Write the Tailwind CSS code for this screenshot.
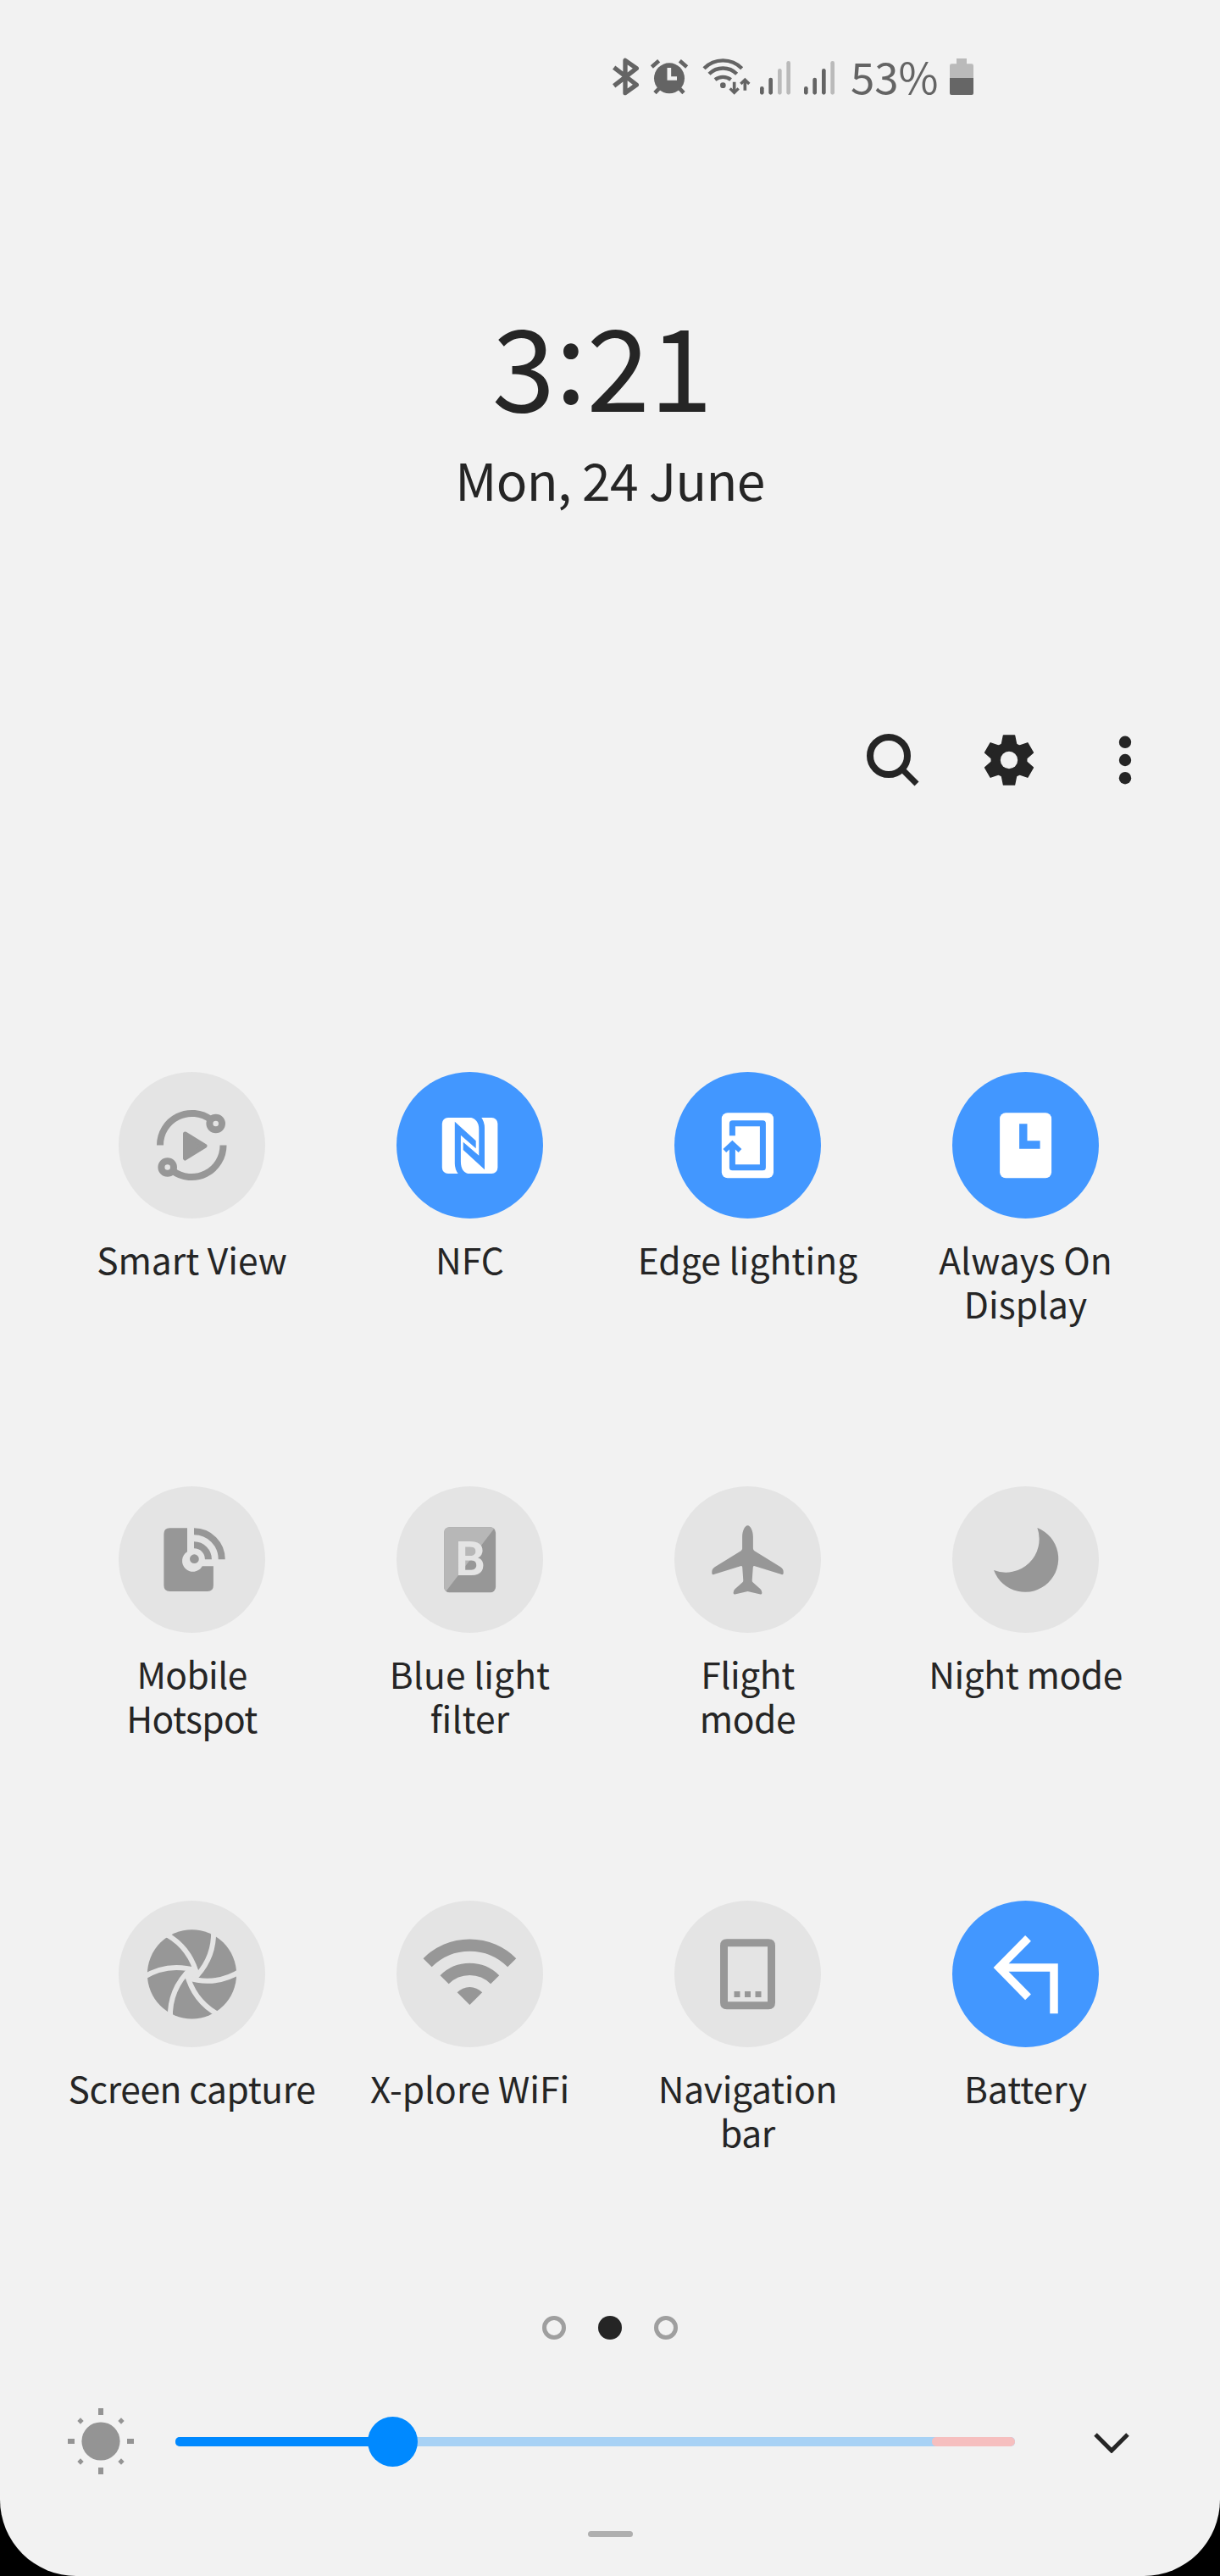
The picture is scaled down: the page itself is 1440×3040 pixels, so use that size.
<!DOCTYPE html>
<html lang="en">
<head>
    <meta charset="UTF-8">
    <meta name="viewport" content="width=device-width, initial-scale=1.0">
    <title>Quick settings</title>
    <script src="https://cdn.jsdelivr.net/npm/@tailwindcss/browser@4"></script>
</head>
<body class="bg-black">
<div class="flex flex-col w-[1440px] h-[3040px] bg-[#f2f2f2] rounded-b-[90px] overflow-hidden text-[#252525] font-['Noto_Sans_CJK_JP','Noto_Sans',sans-serif]">

    <!-- status bar -->
    <div class="flex items-center h-[52px] mt-[63px] pl-[723px] text-[#646464]">
        <svg class="w-[32px] h-[46px] overflow-visible" viewBox="69 48 96 138" fill="none" stroke="currentColor" stroke-width="16" stroke-linejoin="round">
            <path d="M74 154L154 92L114 64V179L154 150L74 89"/>
        </svg>
        <svg class="w-[46px] h-[46px] ml-[12px] overflow-visible" viewBox="201 48 138 138">
            <circle cx="270" cy="127" r="54" fill="currentColor"/>
            <path d="M208 87L233 65M307 65L332 87M219 179L236 161M321 179L304 161" stroke="currentColor" stroke-width="14"/>
            <path d="M269.500 90V127.500H297" fill="none" stroke="#f2f2f2" stroke-width="14"/>
        </svg>
        <svg class="w-[57px] h-[46px] ml-[16px] overflow-visible" viewBox="387 48 171 138" fill="none" stroke="currentColor" stroke-width="13">
            <path d="M393 92A94 94 0 0 1 527 92M411 112A69 69 0 0 1 509 112M432 132A46 46 0 0 1 488 132"/>
            <circle cx="460" cy="152" r="10" fill="currentColor" stroke="none"/>
            <path d="M500 140V176M538 170V134" stroke-width="11"/>
            <path d="M485 163L500 178L515 163M523 147L538 132L553 147" stroke-width="10"/>
        </svg>
        <svg class="w-[38px] h-[46px] ml-[10px] overflow-visible" viewBox="588 48 114 138" fill="currentColor">
            <rect x="591" y="156" width="14" height="29" rx="7"/>
            <rect x="622" y="125" width="14" height="60" rx="7"/>
            <rect x="654" y="93" width="14" height="92" rx="7" fill="#bababa"/>
            <rect x="685" y="66" width="14" height="119" rx="7" fill="#bababa"/>
        </svg>
        <svg class="w-[38px] h-[46px] ml-[14px] overflow-visible" viewBox="744 48 114 138" fill="currentColor">
            <rect x="747" y="156" width="14" height="29" rx="7"/>
            <rect x="778" y="125" width="14" height="60" rx="7"/>
            <rect x="810" y="93" width="14" height="92" rx="7"/>
            <rect x="841" y="66" width="14" height="119" rx="7" fill="#bababa"/>
        </svg>
        <span class="w-[104px] ml-[18px] text-[51px] leading-[52px] whitespace-nowrap">53%</span>
        <svg class="w-[30px] h-[46px] ml-[12px] overflow-visible" viewBox="1260 48 90 138">
            <path d="M1287 57H1323V76H1340Q1347 76 1347 83V126H1263V83Q1263 76 1270 76H1287Z" fill="#bababa"/>
            <path d="M1263 126H1347V180Q1347 186 1341 186H1269Q1263 186 1263 180Z" fill="#666"/>
        </svg>
    </div>

    <!-- clock -->
    <div class="flex flex-col items-center mt-[246px]">
        <p class="flex text-[134px] leading-[134px] -translate-x-[9px]">
            <span>3</span><span class="-translate-y-[10px]">:</span><span>21</span>
        </p>
        <p class="mt-[40px] text-[60.5px] leading-[60px] tracking-[-0.65px] whitespace-nowrap">Mon, 24 June</p>
    </div>

    <!-- actions -->
    <div class="flex items-center h-[64px] mt-[270px] pl-[1021px]">
        <svg class="w-[64px] h-[64px]" viewBox="0 0 64 64" fill="none" stroke="currentColor">
            <circle cx="28" cy="27" r="22" stroke-width="8"/>
            <path d="M45 44L61 60" stroke-width="7"/>
        </svg>
        <svg class="w-[64px] h-[64px] ml-[74px]" viewBox="-32 -32 64 64" fill="currentColor">
            <defs>
                <path id="tooth" d="M-6.500 -29L6.500 -29L8.500 -19L-8.500 -19Z" stroke="currentColor" stroke-width="1.500" stroke-linejoin="round"/>
            </defs>
            <use href="#tooth"/>
            <use href="#tooth" transform="rotate(60)"/>
            <use href="#tooth" transform="rotate(120)"/>
            <use href="#tooth" transform="rotate(180)"/>
            <use href="#tooth" transform="rotate(240)"/>
            <use href="#tooth" transform="rotate(300)"/>
            <circle r="21.500"/>
            <circle r="10.200" fill="#f2f2f2"/>
        </svg>
        <svg class="w-[16px] h-[64px] ml-[97px]" viewBox="-8 -32 16 64" fill="currentColor">
            <circle cy="-21.200" r="7.200"/>
            <circle r="7.200"/>
            <circle cy="21.200" r="7.200"/>
        </svg>
    </div>

    <!-- tiles -->
    <div class="grid grid-cols-[repeat(4,328px)] auto-rows-[489px] mt-[336px] ml-[62.5px] text-[42.5px] leading-[52px] text-center">
        <div class="flex flex-col items-center">
            <div class="w-[173px] h-[173px] rounded-full bg-[#e4e4e4] text-[#979797]">
                <svg viewBox="0 0 173 173" fill="none" stroke="currentColor" stroke-width="8">
                    <path d="M49 86.500A37.400 37.400 0 0 1 109 56.500M123.500 86.500A37.400 37.400 0 0 1 63.500 116.500"/>
                    <circle cx="114.700" cy="61" r="7.300"/>
                    <circle cx="57.700" cy="112.500" r="7.300"/>
                    <path d="M78.500 73L102 87.300L78.500 102Z" fill="currentColor" stroke-width="5" stroke-linejoin="round"/>
                </svg>
            </div>
            <p class="mt-[22px]">Smart View</p>
        </div>
        <div class="flex flex-col items-center">
            <div class="w-[173px] h-[173px] rounded-full bg-[#4297ff] text-white">
                <svg viewBox="0 0 173 173">
                    <rect x="53.800" y="54" width="65.600" height="66" rx="7" fill="currentColor"/>
                    <path d="M68.800 58.700L93.700 81.300V90.300L75.900 74.700V106Q76 120 88 120.500H73Q68.800 115 68.800 108Z" fill="#4297ff"/>
                    <path d="M104 115.300L78.700 92V82.700L97.300 98.700V68Q97.300 54 84 53.500H100Q104 59 104 66Z" fill="#4297ff"/>
                </svg>
            </div>
            <p class="mt-[22px]">NFC</p>
        </div>
        <div class="flex flex-col items-center">
            <div class="w-[173px] h-[173px] rounded-full bg-[#4297ff] text-white">
                <svg viewBox="0 0 173 173" fill="none" stroke="#4297ff">
                    <rect x="55.800" y="48.300" width="61.200" height="77" rx="7" fill="white" stroke="none"/>
                    <path d="M68.400 75.300V60.800H104.400V112.800H68.400V86" stroke-width="7" stroke-linejoin="round"/>
                    <path d="M59.300 93L68.400 84.500L77.500 93" stroke-width="5.500"/>
                </svg>
            </div>
            <p class="mt-[22px] tracking-[0.1px]">Edge lighting</p>
        </div>
        <div class="flex flex-col items-center">
            <div class="w-[173px] h-[173px] rounded-full bg-[#4297ff] text-white">
                <svg viewBox="0 0 173 173">
                    <rect x="56.100" y="48.300" width="61" height="77" rx="7" fill="currentColor"/>
                    <path d="M83.800 61.300V86H103.600" fill="none" stroke="#4297ff" stroke-width="9.400"/>
                </svg>
            </div>
            <p class="mt-[22px]">Always On<br>Display</p>
        </div>

        <div class="flex flex-col items-center">
            <div class="w-[173px] h-[173px] rounded-full bg-[#e4e4e4] text-[#979797]">
                <svg viewBox="0 0 173 173" fill="currentColor">
                    <path d="M60.400 49.300H81V77.300A12.700 12.700 0 1 0 98.800 94.300H111.900V117Q111.900 124 104.900 124H60.400Q53.400 124 53.400 117V56.300Q53.400 49.300 60.400 49.300Z"/>
                    <circle cx="89.400" cy="85.700" r="5.400"/>
                    <path d="M89 53.300A32.700 32.700 0 0 1 121.700 86.300M89 69.300A16.800 16.800 0 0 1 105.900 86.300" fill="none" stroke="currentColor" stroke-width="8"/>
                </svg>
            </div>
            <p class="mt-[22px] tracking-[-0.6px]">Mobile<br>Hotspot</p>
        </div>
        <div class="flex flex-col items-center">
            <div class="w-[173px] h-[173px] rounded-full bg-[#e4e4e4] text-[#979797]">
                <svg viewBox="0 0 173 173">
                    <rect x="56.100" y="48.300" width="61" height="77" rx="6.500" fill="currentColor"/>
                    <path d="M62.600 48.300H110.600Q113.500 48.300 115.200 50L58.400 124Q56.100 122 56.100 118.800V54.800Q56.100 48.300 62.600 48.300Z" fill="#b7b7b7"/>
                    <text x="69.500" y="104.700" class="font-[Roboto] text-[55.5px] font-bold fill-[#e4e4e4]">B</text>
                </svg>
            </div>
            <p class="mt-[22px] tracking-[0.1px]">Blue light<br>filter</p>
        </div>
        <div class="flex flex-col items-center">
            <div class="w-[173px] h-[173px] rounded-full bg-[#e4e4e4] text-[#979797]">
                <svg viewBox="0 0 173 173" fill="currentColor">
                    <path d="M86.500 46.300C90 46.300 92.900 53 92.900 59.700V73.500Q93 75.300 94.500 76.300L125.300 95.300Q128.700 97.500 128.700 101V102.500Q128.700 104.600 126.500 104L95 94.200Q93 93.800 92.800 95.500L91.700 111Q91.600 112.500 92.800 113.600L101.500 121.300Q103.400 123.200 103.400 125.500Q103.400 128 101.500 127.400L86.500 124L71.500 127.400Q69.600 128 69.600 125.500Q69.600 123.200 71.500 121.300L80.200 113.600Q81.400 112.500 81.300 111L80.200 95.500Q80 93.800 78 94.200L46.500 104Q44.300 104.600 44.300 102.500V101Q44.300 97.500 47.700 95.300L78.500 76.300Q80 75.300 80.100 73.500V59.700C80.100 53 83 46.300 86.500 46.300Z"/>
                </svg>
            </div>
            <p class="mt-[22px] tracking-[-0.4px]">Flight<br>mode</p>
        </div>
        <div class="flex flex-col items-center">
            <div class="w-[173px] h-[173px] rounded-full bg-[#e4e4e4] text-[#979797]">
                <svg viewBox="0 0 173 173" fill="currentColor">
                    <path d="M100.400 49A39.300 39.300 0 1 1 49 99A39.500 39.500 0 0 0 100.400 49Z"/>
                </svg>
            </div>
            <p class="mt-[22px] tracking-[-0.4px]">Night mode</p>
        </div>

        <div class="flex flex-col items-center">
            <div class="w-[173px] h-[173px] rounded-full bg-[#e4e4e4] text-[#979797]">
                <svg viewBox="-86.500 -86.800 173 173">
                    <defs>
                        <path id="blade" d="M25.500 -52Q27 -18 1 7" fill="none" stroke="#e4e4e4" stroke-width="6"/>
                    </defs>
                    <circle r="52.600" fill="currentColor"/>
                    <circle r="6" fill="#e4e4e4"/>
                    <use href="#blade"/>
                    <use href="#blade" transform="rotate(60)"/>
                    <use href="#blade" transform="rotate(120)"/>
                    <use href="#blade" transform="rotate(180)"/>
                    <use href="#blade" transform="rotate(240)"/>
                    <use href="#blade" transform="rotate(300)"/>
                </svg>
            </div>
            <p class="mt-[22px] tracking-[-0.4px] whitespace-nowrap">Screen capture</p>
        </div>
        <div class="flex flex-col items-center">
            <div class="w-[173px] h-[173px] rounded-full bg-[#e4e4e4] text-[#979797]">
                <svg viewBox="0 0 173 173" fill="none" stroke="currentColor" stroke-width="14.300">
                    <path d="M36.600 73.200A70.400 70.400 0 0 1 136.200 73.200M56.600 93.200A42.200 42.200 0 0 1 116.200 93.200"/>
                    <path d="M86.400 123L71.600 108.200A21 21 0 0 1 101.200 108.200Z" fill="currentColor" stroke="none"/>
                </svg>
            </div>
            <p class="mt-[22px] whitespace-nowrap">X-plore WiFi</p>
        </div>
        <div class="flex flex-col items-center">
            <div class="w-[173px] h-[173px] rounded-full bg-[#e4e4e4] text-[#979797]">
                <svg viewBox="0 0 173 173" fill="currentColor">
                    <path fill-rule="evenodd" d="M62 45.300H111Q119 45.300 119 53.300V120.300Q119 128.300 111 128.300H62Q54 128.300 54 120.300V53.300Q54 45.300 62 45.300ZM63 54.300V119.300H110V54.300Z"/>
                    <path d="M70.500 107H77.500V114H70.500ZM83 107H90V114H83ZM95.500 107H102.500V114H95.500Z"/>
                </svg>
            </div>
            <p class="mt-[22px] tracking-[-0.3px]">Navigation<br>bar</p>
        </div>
        <div class="flex flex-col items-center">
            <div class="w-[173px] h-[173px] rounded-full bg-[#4297ff] text-white">
                <svg viewBox="0 0 173 173" fill="none" stroke="currentColor" stroke-width="9.500">
                    <path d="M89.500 44.300L55.300 79L89.500 113.800M57 79H120V133.300"/>
                </svg>
            </div>
            <p class="mt-[22px]">Battery</p>
        </div>
    </div>

    <!-- pages -->
    <div class="flex justify-center gap-[38px] mt-[1px]">
        <span class="w-[28px] h-[28px] rounded-full border-[5px] border-[#9f9f9f]"></span>
        <span class="w-[28px] h-[28px] rounded-full bg-[#252525]"></span>
        <span class="w-[28px] h-[28px] rounded-full border-[5px] border-[#9f9f9f]"></span>
    </div>

    <!-- brightness -->
    <div class="flex items-center h-[80px] mt-[80px] pl-[79px]">
        <svg class="w-[80px] h-[80px]" viewBox="-40 -40 80 80" fill="#949494">
            <circle r="22.600"/>
            <path d="M-3 -39H3V-31H-3ZM-3 31H3V39H-3ZM-39 -3H-31V3H-39ZM31 -3H39V3H31Z"/>
            <path d="M-24 -27.700L-20.300 -24L-24 -20.300L-27.700 -24ZM24 -27.700L27.700 -24L24 -20.300L20.300 -24ZM-24 20.300L-20.300 24L-24 27.700L-27.700 24ZM24 20.300L27.700 24L24 27.700L20.300 24Z"/>
        </svg>
        <div class="relative w-[991px] h-[59px] ml-[48px] flex items-center">
            <div class="flex w-full h-[11px] rounded-[5px] overflow-hidden bg-[#a8d2f5]">
                <div class="w-[256px] bg-[#0089ff]"></div>
                <div class="w-[98px] ml-auto rounded-[5px] bg-[#f6bfbf]"></div>
            </div>
            <div class="absolute left-[227px] top-0 w-[59px] h-[59px] rounded-full bg-[#0089ff]"></div>
        </div>
        <svg class="w-[42px] h-[24px] mt-[3px] ml-[93px]" viewBox="0 0 42 24" fill="none" stroke="currentColor" stroke-width="5">
            <path d="M2 2L21 21L40 2"/>
        </svg>
    </div>

    <div class="w-[53px] h-[7px] mt-[66px] mx-auto rounded-full bg-[#afafaf]"></div>
</div>
</body>
</html>
